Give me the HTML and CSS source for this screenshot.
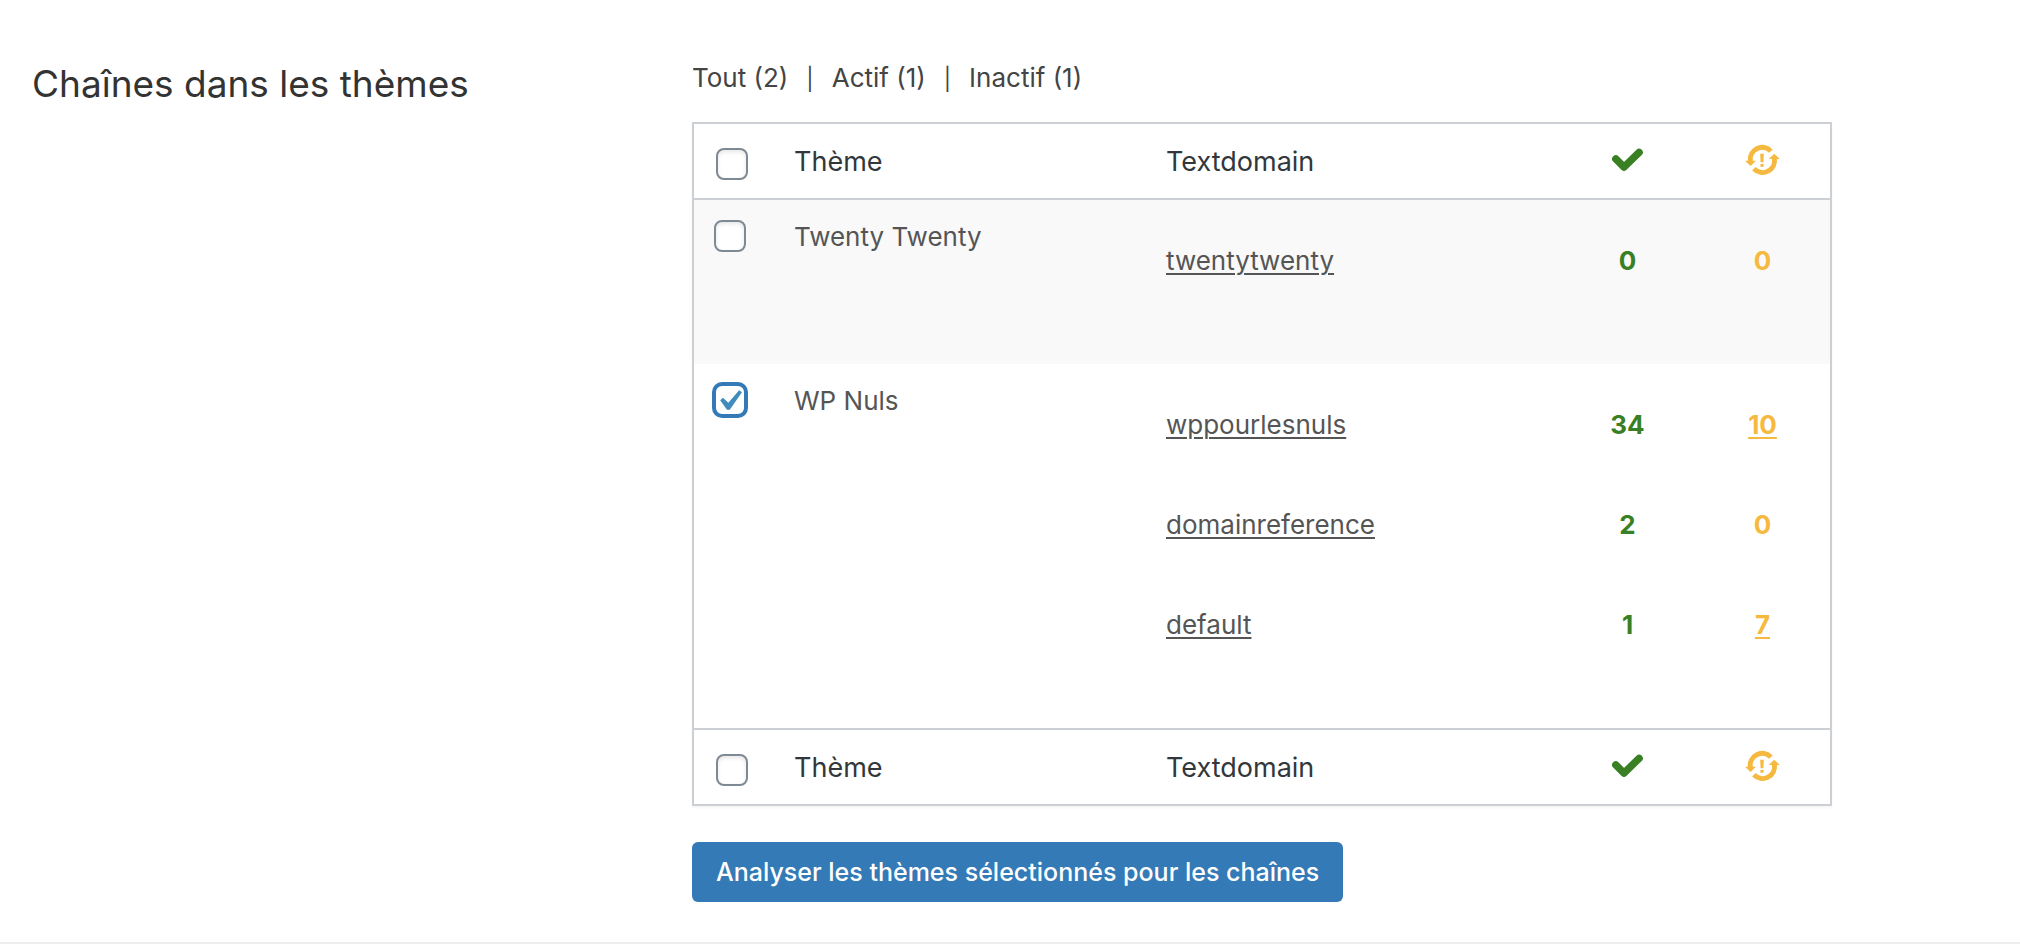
FILE: index.html
```html
<!DOCTYPE html>
<html lang="fr">
<head>
  <meta charset="utf-8">
  <meta name="viewport" content="width=device-width, initial-scale=1">
  <title>Chaînes dans les thèmes</title>
  <link rel="stylesheet" href="styles.css">
</head>
<body>
  <svg class="sprite" aria-hidden="true">
    <symbol id="icon-check" viewBox="0 0 31 23">
      <path d="M3.8 10.4L12 18.7L27.1 3.8" fill="none" stroke="currentColor" stroke-width="7.4" stroke-linecap="round" stroke-linejoin="round"/>
    </symbol>
    <symbol id="icon-sync" viewBox="0 0 35 29">
      <g id="sync-half">
        <path d="M5.4 16A12 12 0 0 1 25.9 5.6" fill="none" stroke="currentColor" stroke-width="5"/>
        <path d="M0 15.3H11L5.6 20.6Z" fill="currentColor"/>
      </g>
      <use href="#sync-half" transform="rotate(180 17.4 14.4)"/>
      <path d="M15.2 8.2H18.8L18.4 16.8H15.6ZM15.4 18.4H18.6V21.2H15.4Z" fill="currentColor"/>
    </symbol>
  </svg>

  <section class="section">
    <h2 class="section-title">Chaînes dans les thèmes</h2>
    <form class="section-content">
      <ul class="filters">
        <li>Tout (2)</li>
        <li>Actif (1)</li>
        <li>Inactif (1)</li>
      </ul>

      <table class="themes">
        <colgroup>
          <col class="col-check">
          <col class="col-theme">
          <col class="col-domain">
          <col class="col-count">
          <col class="col-count">
        </colgroup>
        <thead>
          <tr>
            <td class="check"><input class="checkbox" type="checkbox" aria-label="Tout sélectionner"></td>
            <th scope="col">Thème</th>
            <th scope="col">Textdomain</th>
            <th scope="col" class="count done" aria-label="Traduit"><svg class="icon-check"><use href="#icon-check"/></svg></th>
            <th scope="col" class="count pending" aria-label="À traduire"><svg class="icon-sync"><use href="#icon-sync"/></svg></th>
          </tr>
        </thead>
        <tbody>
          <tr>
            <td class="check"><input class="checkbox" type="checkbox" id="theme-twenty"></td>
            <td class="name"><label for="theme-twenty">Twenty Twenty</label></td>
            <td class="domains"><ul><li><a href="#twentytwenty">twentytwenty</a></li></ul></td>
            <td class="count done"><ul><li>0</li></ul></td>
            <td class="count pending"><ul><li>0</li></ul></td>
          </tr>
          <tr>
            <td class="check"><input class="checkbox" type="checkbox" id="theme-nuls" checked></td>
            <td class="name"><label for="theme-nuls">WP Nuls</label></td>
            <td class="domains">
              <ul>
                <li><a href="#wppourlesnuls">wppourlesnuls</a></li>
                <li><a href="#domainreference">domainreference</a></li>
                <li><a href="#default">default</a></li>
              </ul>
            </td>
            <td class="count done"><ul><li>34</li><li>2</li><li>1</li></ul></td>
            <td class="count pending">
              <ul>
                <li><a href="#wppourlesnuls">10</a></li>
                <li>0</li>
                <li><a href="#default">7</a></li>
              </ul>
            </td>
          </tr>
        </tbody>
        <tfoot>
          <tr>
            <td class="check"><input class="checkbox" type="checkbox" aria-label="Tout sélectionner"></td>
            <th scope="col">Thème</th>
            <th scope="col">Textdomain</th>
            <th scope="col" class="count done" aria-label="Traduit"><svg class="icon-check"><use href="#icon-check"/></svg></th>
            <th scope="col" class="count pending" aria-label="À traduire"><svg class="icon-sync"><use href="#icon-sync"/></svg></th>
          </tr>
        </tfoot>
      </table>

      <button class="button" type="button">Analyser les thèmes sélectionnés pour les chaînes</button>
    </form>
  </section>
</body>
</html>
```
FILE: styles.css
```css
* {
  box-sizing: border-box;
}

body {
  margin: 0;
  background: #fff;
  color: #444;
  font: 26px/36px Inter, "Liberation Sans", sans-serif;
}

ul {
  margin: 0;
  padding: 0;
  list-style: none;
}

.sprite {
  display: none;
}

.section {
  display: grid;
  grid-template-columns: 660px minmax(0, 1fr);
  padding: 60px 188px 40px 32px;
  border-bottom: 2px solid #eee;
}

.section-title {
  margin: 0;
  color: #333;
  font-size: 37px;
  font-weight: 400;
  line-height: 48px;
}

.filters {
  display: flex;
  margin-bottom: 25px;
}

.filters li + li::before {
  content: "|";
  margin: 0 18px;
  font-size: 22px;
}

.themes {
  width: 100%;
  table-layout: fixed;
  border: 2px solid #ccd0d4;
  border-spacing: 0;
  box-shadow: 0 2px 2px rgba(0, 0, 0, 0.04);
  color: #555;
}

.col-check {
  width: 84px;
}

.col-theme {
  width: 372px;
}

.col-count {
  width: 135px;
}

.themes th,
.themes td {
  padding: 0 16px;
  text-align: left;
  vertical-align: top;
}

.themes th {
  padding: 20px 16px 18px;
  color: #32373c;
  font-size: 27px;
  font-weight: 400;
}

.themes th.count {
  padding-top: 18px;
}

.themes thead th,
.themes thead td {
  border-bottom: 2px solid #ccd0d4;
}

.themes tfoot th,
.themes tfoot td {
  border-top: 2px solid #ccd0d4;
}

.themes .check {
  padding: 24px 0 0 22px;
}

.themes tbody .check {
  padding: 20px 0 0 20px;
}

.themes tbody tr:nth-child(odd) {
  background: #f9f9f9;
}

.themes .name {
  padding-top: 19px;
}

.themes tbody .domains,
.themes tbody .count {
  padding-top: 11px;
  padding-bottom: 53px;
}

.themes .count {
  text-align: center;
  font-weight: 700;
}

.themes .count svg {
  display: block;
  margin: 0 auto;
}

.themes li {
  height: 100px;
  line-height: 100px;
}

.themes a {
  color: inherit;
  text-decoration-thickness: 2px;
  text-underline-offset: 3px;
}

.themes .done {
  color: #388023;
}

.themes .pending {
  color: #f6b93f;
}

.icon-check {
  width: 31px;
  height: 36px;
}

.icon-sync {
  width: 35px;
  height: 36px;
}

.checkbox {
  appearance: none;
  display: block;
  width: 32px;
  height: 32px;
  margin: 0;
  border: 2px solid #7e8993;
  border-radius: 8px;
  background: #fff;
  box-shadow: inset 0 2px 4px rgba(0, 0, 0, 0.1);
}

.checkbox:checked {
  border-color: #337ab7;
  background: #fff url("data:image/svg+xml,%3Csvg xmlns='http://www.w3.org/2000/svg' viewBox='0 0 20 20'%3E%3Cpath d='M14.83 4.89l1.34.94-5.81 8.38H9.02L5.78 9.67l1.34-1.25 2.57 2.4z' fill='%233f8cbd'/%3E%3C/svg%3E") -8px -6px / 42px no-repeat;
  box-shadow: 0 0 0 2px #337ab7;
}

.button {
  display: block;
  margin: 36px 0 0;
  padding: 12px 24px;
  border: 0;
  border-radius: 6px;
  background: #337ab7;
  color: #fff;
  font: inherit;
  font-size: 25px;
  font-weight: 500;
}
```
